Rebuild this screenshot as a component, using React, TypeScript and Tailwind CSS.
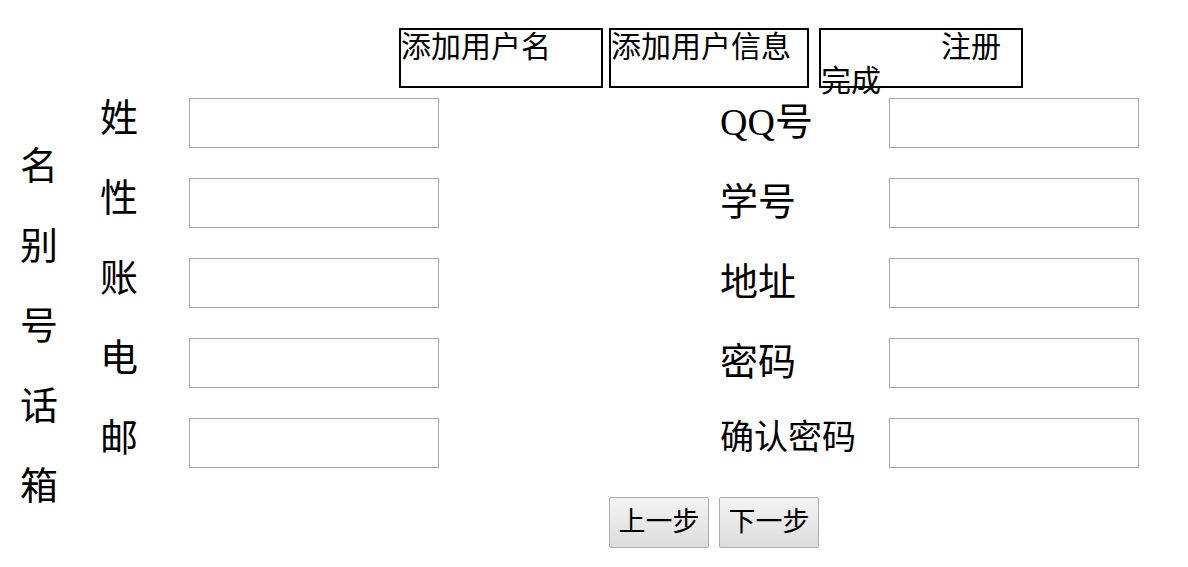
import React from 'react';

const font = "font-['Liberation_Serif','Noto_Sans_CJK_SC',serif]";

export default function App() {
  const leftA = ['名', '别', '号', '话', '箱'];
  const leftB = ['姓', '性', '账', '电', '邮'];
  const right = ['QQ号', '学号', '地址', '密码'];

  return (
    <div className={`w-[1188px] h-[567px] bg-white text-black ${font}`}>
      {/* tabs */}
      <div className="flex pl-[399px] pt-[28px] gap-[6px]">
        <div className="w-[204px] h-[60px] border-2 border-black text-[30px] leading-[34px]">添加用户名</div>
        <div className="w-[200px] h-[60px] border-2 border-black text-[30px] leading-[34px]">添加用户信息</div>
        <div className="ml-[4px] w-[204px] h-[60px] border-2 border-black text-[30px] leading-[34px] indent-[120px] break-all">
          注册完成
        </div>
      </div>

      <div className="flex mt-[10px] h-[399px]">
        {/* left block */}
        <div className="flex">
          <div className="ml-[20px] w-[80px] pt-[48px] flex flex-col">
            {leftA.map((c) => (
              <div key={c} className="h-[80px] shrink-0 text-[38px] leading-[40px]">{c}</div>
            ))}
          </div>
          <div className="w-[89px] flex flex-col">
            {leftB.map((c) => (
              <div key={c} className="h-[80px] shrink-0 text-[38px] leading-[40px]">{c}</div>
            ))}
          </div>
          <div className="flex flex-col gap-[30px]">
            {leftB.map((c) => (
              <input key={c} className="w-[250px] h-[50px] shrink-0 border border-[#a9a9a9] outline-none" />
            ))}
          </div>
        </div>

        {/* right block */}
        <div className="flex ml-[281px]">
          <div className="w-[169px] flex flex-col">
            {right.map((c) => (
              <div key={c} className="h-[80px] shrink-0 text-[38px] leading-[48px]">{c}</div>
            ))}
            <div className="h-[80px] shrink-0 text-[34px] leading-[40px]">确认密码</div>
          </div>
          <div className="flex flex-col gap-[30px]">
            {[0, 1, 2, 3, 4].map((i) => (
              <input key={i} className="w-[250px] h-[50px] shrink-0 border border-[#a9a9a9] outline-none" />
            ))}
          </div>
        </div>
      </div>

      {/* buttons */}
      <div className="flex gap-[10px] pl-[609px]">
        <button className="w-[100px] h-[51px] border border-[#adadad] rounded-[2px] bg-gradient-to-b from-[#f4f4f4] to-[#dcdcdc] text-[27px] leading-none">上一步</button>
        <button className="w-[100px] h-[51px] border border-[#adadad] rounded-[2px] bg-gradient-to-b from-[#f4f4f4] to-[#dcdcdc] text-[27px] leading-none">下一步</button>
      </div>
    </div>
  );
}
